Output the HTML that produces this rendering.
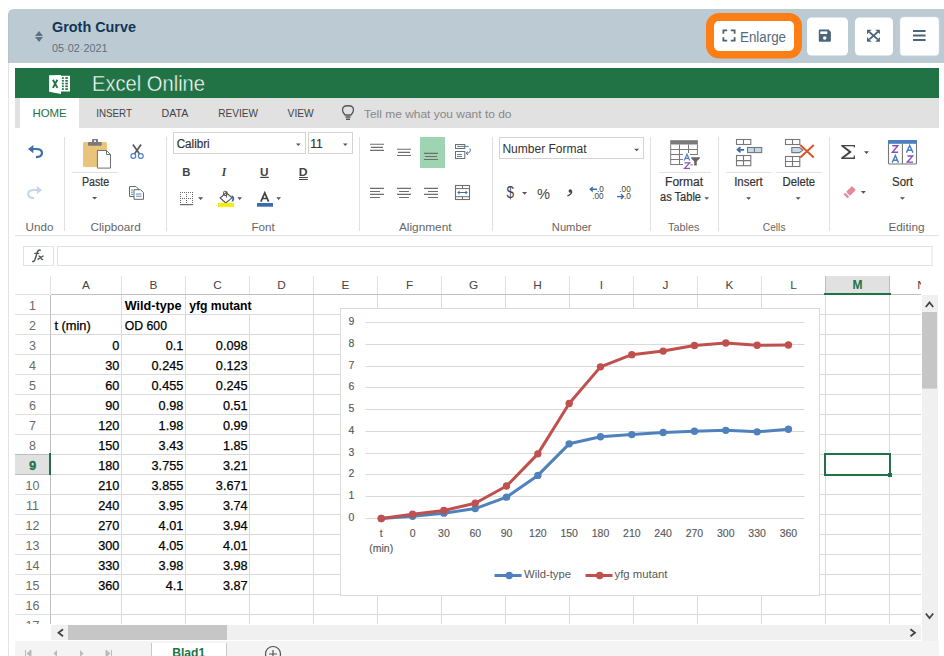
<!DOCTYPE html>
<html><head><meta charset="utf-8"><style>
html,body{margin:0;padding:0;background:#fff;width:944px;height:656px;overflow:hidden}
svg{display:block}
text{font-family:"Liberation Sans", sans-serif}
</style></head><body>
<svg width="944" height="656" viewBox="0 0 944 656">
<path d="M8,15 Q8,9 14,9 L944,9 L944,63 L8,63 Z" fill="#bccbd3"/>
<rect x="8" y="63" width="1" height="593" fill="#dfe4e8" />
<rect x="8" y="14" width="0.6" height="49" fill="#b0bfc8" />
<path d="M35,36 L43,36 L39,31 Z M35,37 L43,37 L39,42 Z" fill="#5f7281"/>
<text x="52" y="32" font-size="14" fill="#123557" font-weight="bold" textLength="84" lengthAdjust="spacingAndGlyphs" >Groth Curve</text>
<text x="52" y="51.5" font-size="11" fill="#5c6f7e" textLength="55.5" lengthAdjust="spacingAndGlyphs" >05<tspan fill="#a3b1ba">-</tspan>02<tspan fill="#a3b1ba">-</tspan>2021</text>
<rect x="706" y="13" width="96" height="45.5" fill="#fd7e14" rx="13"/>
<rect x="714" y="21" width="80" height="30" fill="#ffffff" rx="5"/>
<path d="M723.4,33.8 V30.4 H727.2 M730.8,30.4 H734.6 V33.8 M734.6,37.2 V40.6 H730.8 M727.2,40.6 H723.4 V37.2" fill="none" stroke="#4a6275" stroke-width="1.8"/>
<text x="740" y="41.5" font-size="13.8" fill="#546a7c" textLength="46" lengthAdjust="spacingAndGlyphs" >Enlarge</text>
<rect x="807" y="17.5" width="41" height="38" fill="#ffffff" rx="4.5"/>
<rect x="855" y="17.5" width="38" height="38" fill="#ffffff" rx="4.5"/>
<rect x="900" y="17" width="39" height="38.8" fill="#ffffff" rx="3.8" stroke="#d5dce0" stroke-width="0.5"/>
<path d="M819.5,29.6 H828.6 L830.9,31.9 V40.7 Q830.9,41.7 829.9,41.7 H819.8 Q818.8,41.7 818.8,40.7 V30.6 Q818.8,29.6 819.5,29.6 Z" fill="#4d6578"/>
<rect x="820.3" y="31.4" width="7" height="2.6" fill="#ffffff"/><circle cx="824.7" cy="38.1" r="1.75" fill="#ffffff"/>
<path d="M869.3,32 L877.7,39.4 M877.7,32 L869.3,39.4" stroke="#4d6578" stroke-width="1.8"/>
<path d="M867,29.7 H871.6 L867,34.3 Z M879.9,29.7 H875.3 L879.9,34.3 Z M867,41.7 H871.6 L867,37.1 Z M879.9,41.7 H875.3 L879.9,37.1 Z" fill="#4d6578"/>
<path d="M913,31.1 H925.6 M913,35.6 H925.6 M913,40.1 H925.6" stroke="#4d6578" stroke-width="2"/>
<rect x="15" y="68" width="924" height="30" fill="#217346" />
<rect x="61" y="75.8" width="9" height="15.7" fill="#ffffff"/>
<rect x="61.9" y="77.20" width="1.9" height="1.7" fill="#217346"/><rect x="65.3" y="77.20" width="2.6" height="1.7" fill="#217346"/><rect x="61.9" y="79.95" width="1.9" height="1.7" fill="#217346"/><rect x="65.3" y="79.95" width="2.6" height="1.7" fill="#217346"/><rect x="61.9" y="82.70" width="1.9" height="1.7" fill="#217346"/><rect x="65.3" y="82.70" width="2.6" height="1.7" fill="#217346"/><rect x="61.9" y="85.45" width="1.9" height="1.7" fill="#217346"/><rect x="65.3" y="85.45" width="2.6" height="1.7" fill="#217346"/><rect x="61.9" y="88.20" width="1.9" height="1.7" fill="#217346"/><rect x="65.3" y="88.20" width="2.6" height="1.7" fill="#217346"/>
<path d="M49.1,75.3 L61,74.9 L61,93.9 L49.1,91.8 Z" fill="#ffffff"/>
<path d="M52.9,79.8 L57.4,87.9 M57.4,79.8 L52.9,87.9" stroke="#217346" stroke-width="1.9"/>
<text x="92" y="91.4" font-size="22" fill="#ffffff" textLength="113" lengthAdjust="spacingAndGlyphs" stroke="#217346" stroke-width="0.45">Excel Online</text>
<rect x="15" y="98" width="924" height="30" fill="#e1e1e1" />
<rect x="20" y="98" width="59" height="30" fill="#ffffff" />
<text x="32.4" y="117.3" font-size="11.5" fill="#217346" textLength="34.3" lengthAdjust="spacingAndGlyphs" >HOME</text>
<text x="96.2" y="117.3" font-size="11.5" fill="#444444" textLength="35.8" lengthAdjust="spacingAndGlyphs" >INSERT</text>
<text x="161.5" y="117.3" font-size="11.5" fill="#444444" textLength="27" lengthAdjust="spacingAndGlyphs" >DATA</text>
<text x="218.2" y="117.3" font-size="11.5" fill="#444444" textLength="39.7" lengthAdjust="spacingAndGlyphs" >REVIEW</text>
<text x="287.6" y="117.3" font-size="11.5" fill="#444444" textLength="26.2" lengthAdjust="spacingAndGlyphs" >VIEW</text>
<path d="M345,115 C342,112 342,108.5 343.5,107 C345,105.3 351,105.3 352.5,107 C354,108.5 354,112 351,115 Z" fill="none" stroke="#555" stroke-width="1.3"/>
<path d="M345.5,117 H350.5 M346,119.3 H350" stroke="#555" stroke-width="1.5"/>
<text x="364" y="118.4" font-size="11.5" fill="#888888" textLength="147.5" lengthAdjust="spacingAndGlyphs" >Tell me what you want to do</text>
<rect x="15" y="235" width="924" height="1" fill="#e1e1e1" />
<rect x="64" y="137" width="1" height="94" fill="#e1e1e1" />
<rect x="166" y="137" width="1" height="94" fill="#e1e1e1" />
<rect x="359" y="137" width="1" height="94" fill="#e1e1e1" />
<rect x="492" y="137" width="1" height="94" fill="#e1e1e1" />
<rect x="650" y="137" width="1" height="94" fill="#e1e1e1" />
<rect x="718" y="137" width="1" height="94" fill="#e1e1e1" />
<rect x="829" y="137" width="1" height="94" fill="#e1e1e1" />
<text x="25.6" y="230.7" font-size="11" fill="#666666" textLength="27.8" lengthAdjust="spacingAndGlyphs" >Undo</text>
<text x="90.5" y="230.7" font-size="11" fill="#666666" textLength="50.3" lengthAdjust="spacingAndGlyphs" >Clipboard</text>
<text x="251.4" y="230.7" font-size="11" fill="#666666" textLength="23.3" lengthAdjust="spacingAndGlyphs" >Font</text>
<text x="398.9" y="230.7" font-size="11" fill="#666666" textLength="52.7" lengthAdjust="spacingAndGlyphs" >Alignment</text>
<text x="551.8" y="230.7" font-size="11" fill="#666666" textLength="39.8" lengthAdjust="spacingAndGlyphs" >Number</text>
<text x="668.1" y="230.7" font-size="11" fill="#666666" textLength="31.2" lengthAdjust="spacingAndGlyphs" >Tables</text>
<text x="762.8" y="230.7" font-size="11" fill="#666666" textLength="22.7" lengthAdjust="spacingAndGlyphs" >Cells</text>
<text x="888.4" y="230.7" font-size="11" fill="#666666" textLength="36.2" lengthAdjust="spacingAndGlyphs" >Editing</text>
<rect x="23.5" y="246.5" width="30" height="19" fill="#fff" stroke="#e2e2e2"/>
<rect x="57.5" y="246.5" width="874.5" height="19" fill="#fff" stroke="#e2e2e2"/>
<path d="M32.2,261.2 Q33.8,262.4 35,259.5 L37.4,252 Q38.6,249.2 40.8,250.4" fill="none" stroke="#50555c" stroke-width="1.5"/>
<path d="M34.2,253.4 H39.2" stroke="#50555c" stroke-width="1.2"/>
<path d="M37.6,259.6 Q40.5,257.5 43.6,255.8 M38.6,256 Q40.4,256.2 40.9,258 Q41.4,259.8 43.2,259.6" fill="none" stroke="#50555c" stroke-width="1.3"/>
<rect x="50" y="276" width="1" height="18" fill="#e1e1e1" />
<rect x="121" y="276" width="1" height="18" fill="#e1e1e1" />
<rect x="185" y="276" width="1" height="18" fill="#e1e1e1" />
<rect x="249" y="276" width="1" height="18" fill="#e1e1e1" />
<rect x="313" y="276" width="1" height="18" fill="#e1e1e1" />
<rect x="377" y="276" width="1" height="18" fill="#e1e1e1" />
<rect x="441" y="276" width="1" height="18" fill="#e1e1e1" />
<rect x="505" y="276" width="1" height="18" fill="#e1e1e1" />
<rect x="569" y="276" width="1" height="18" fill="#e1e1e1" />
<rect x="633" y="276" width="1" height="18" fill="#e1e1e1" />
<rect x="697" y="276" width="1" height="18" fill="#e1e1e1" />
<rect x="761" y="276" width="1" height="18" fill="#e1e1e1" />
<rect x="825" y="276" width="1" height="18" fill="#e1e1e1" />
<rect x="889" y="276" width="1" height="18" fill="#e1e1e1" />
<rect x="825" y="276" width="64" height="18" fill="#e1e1e1" />
<rect x="825" y="276" width="1" height="18" fill="#bdbdbd" />
<rect x="889" y="276" width="1" height="18" fill="#bdbdbd" />
<rect x="15" y="294" width="35" height="1" fill="#e1e1e1" />
<rect x="51" y="294" width="870" height="1" fill="#c0c0c0" />
<rect x="824" y="293" width="67" height="2" fill="#217346" />
<text x="86.0" y="289" font-size="11.8" fill="#444444" text-anchor="middle" >A</text>
<text x="153.5" y="289" font-size="11.8" fill="#444444" text-anchor="middle" >B</text>
<text x="217.5" y="289" font-size="11.8" fill="#444444" text-anchor="middle" >C</text>
<text x="281.5" y="289" font-size="11.8" fill="#444444" text-anchor="middle" >D</text>
<text x="345.5" y="289" font-size="11.8" fill="#444444" text-anchor="middle" >E</text>
<text x="409.5" y="289" font-size="11.8" fill="#444444" text-anchor="middle" >F</text>
<text x="473.5" y="289" font-size="11.8" fill="#444444" text-anchor="middle" >G</text>
<text x="537.5" y="289" font-size="11.8" fill="#444444" text-anchor="middle" >H</text>
<text x="601.5" y="289" font-size="11.8" fill="#444444" text-anchor="middle" >I</text>
<text x="665.5" y="289" font-size="11.8" fill="#444444" text-anchor="middle" >J</text>
<text x="729.5" y="289" font-size="11.8" fill="#444444" text-anchor="middle" >K</text>
<text x="793.5" y="289" font-size="11.8" fill="#444444" text-anchor="middle" >L</text>
<text x="857.5" y="289" font-size="12" fill="#217346" font-weight="bold" text-anchor="middle" >M</text>
<text x="921.5" y="289" font-size="11.8" fill="#444444" text-anchor="middle" >N</text>
<rect x="921" y="276" width="23" height="20" fill="#ffffff" />
<rect x="15" y="314" width="35" height="1" fill="#e1e1e1" />
<rect x="51" y="314" width="870" height="1" fill="#dadada" />
<rect x="15" y="334" width="35" height="1" fill="#e1e1e1" />
<rect x="51" y="334" width="870" height="1" fill="#dadada" />
<rect x="15" y="354" width="35" height="1" fill="#e1e1e1" />
<rect x="51" y="354" width="870" height="1" fill="#dadada" />
<rect x="15" y="374" width="35" height="1" fill="#e1e1e1" />
<rect x="51" y="374" width="870" height="1" fill="#dadada" />
<rect x="15" y="394" width="35" height="1" fill="#e1e1e1" />
<rect x="51" y="394" width="870" height="1" fill="#dadada" />
<rect x="15" y="414" width="35" height="1" fill="#e1e1e1" />
<rect x="51" y="414" width="870" height="1" fill="#dadada" />
<rect x="15" y="434" width="35" height="1" fill="#e1e1e1" />
<rect x="51" y="434" width="870" height="1" fill="#dadada" />
<rect x="15" y="454" width="35" height="1" fill="#e1e1e1" />
<rect x="51" y="454" width="870" height="1" fill="#dadada" />
<rect x="15" y="474" width="35" height="1" fill="#e1e1e1" />
<rect x="51" y="474" width="870" height="1" fill="#dadada" />
<rect x="15" y="494" width="35" height="1" fill="#e1e1e1" />
<rect x="51" y="494" width="870" height="1" fill="#dadada" />
<rect x="15" y="514" width="35" height="1" fill="#e1e1e1" />
<rect x="51" y="514" width="870" height="1" fill="#dadada" />
<rect x="15" y="534" width="35" height="1" fill="#e1e1e1" />
<rect x="51" y="534" width="870" height="1" fill="#dadada" />
<rect x="15" y="554" width="35" height="1" fill="#e1e1e1" />
<rect x="51" y="554" width="870" height="1" fill="#dadada" />
<rect x="15" y="574" width="35" height="1" fill="#e1e1e1" />
<rect x="51" y="574" width="870" height="1" fill="#dadada" />
<rect x="15" y="594" width="35" height="1" fill="#e1e1e1" />
<rect x="51" y="594" width="870" height="1" fill="#dadada" />
<rect x="15" y="614" width="35" height="1" fill="#e1e1e1" />
<rect x="51" y="614" width="870" height="1" fill="#dadada" />
<rect x="121" y="295" width="1" height="329" fill="#dadada" />
<rect x="185" y="295" width="1" height="329" fill="#dadada" />
<rect x="249" y="314" width="1" height="310" fill="#dadada" />
<rect x="313" y="295" width="1" height="329" fill="#dadada" />
<rect x="377" y="295" width="1" height="329" fill="#dadada" />
<rect x="441" y="295" width="1" height="329" fill="#dadada" />
<rect x="505" y="295" width="1" height="329" fill="#dadada" />
<rect x="569" y="295" width="1" height="329" fill="#dadada" />
<rect x="633" y="295" width="1" height="329" fill="#dadada" />
<rect x="697" y="295" width="1" height="329" fill="#dadada" />
<rect x="761" y="295" width="1" height="329" fill="#dadada" />
<rect x="825" y="295" width="1" height="329" fill="#dadada" />
<rect x="889" y="295" width="1" height="329" fill="#dadada" />
<rect x="50" y="295" width="1" height="329" fill="#c0c0c0" />
<rect x="15" y="454" width="34" height="20" fill="#e1e1e1" />
<rect x="15" y="454" width="34" height="1" fill="#bdbdbd" />
<rect x="15" y="474" width="34" height="1" fill="#bdbdbd" />
<rect x="49" y="453" width="2" height="22" fill="#217346" />
<clipPath id="gclip"><rect x="0" y="0" width="944" height="624"/></clipPath><g clip-path="url(#gclip)">
<text x="32.5" y="310" font-size="12.5" fill="#6a6a6a" text-anchor="middle" >1</text>
<text x="32.5" y="330" font-size="12.5" fill="#6a6a6a" text-anchor="middle" >2</text>
<text x="32.5" y="350" font-size="12.5" fill="#6a6a6a" text-anchor="middle" >3</text>
<text x="32.5" y="370" font-size="12.5" fill="#6a6a6a" text-anchor="middle" >4</text>
<text x="32.5" y="390" font-size="12.5" fill="#6a6a6a" text-anchor="middle" >5</text>
<text x="32.5" y="410" font-size="12.5" fill="#6a6a6a" text-anchor="middle" >6</text>
<text x="32.5" y="430" font-size="12.5" fill="#6a6a6a" text-anchor="middle" >7</text>
<text x="32.5" y="450" font-size="12.5" fill="#6a6a6a" text-anchor="middle" >8</text>
<text x="32.5" y="469.5" font-size="13" fill="#217346" font-weight="bold" text-anchor="middle" stroke="#217346" stroke-width="0.3">9</text>
<text x="32.5" y="490" font-size="12.5" fill="#6a6a6a" text-anchor="middle" >10</text>
<text x="32.5" y="510" font-size="12.5" fill="#6a6a6a" text-anchor="middle" >11</text>
<text x="32.5" y="530" font-size="12.5" fill="#6a6a6a" text-anchor="middle" >12</text>
<text x="32.5" y="550" font-size="12.5" fill="#6a6a6a" text-anchor="middle" >13</text>
<text x="32.5" y="570" font-size="12.5" fill="#6a6a6a" text-anchor="middle" >14</text>
<text x="32.5" y="590" font-size="12.5" fill="#6a6a6a" text-anchor="middle" >15</text>
<text x="32.5" y="610" font-size="12.5" fill="#6a6a6a" text-anchor="middle" >16</text>
<text x="32.5" y="630" font-size="12.5" fill="#6a6a6a" text-anchor="middle" >17</text>
</g>
<text x="54.4" y="329.6" font-size="12.7" fill="#000" textLength="36.4" lengthAdjust="spacingAndGlyphs" stroke="#000" stroke-width="0.25">t (min)</text>
<text x="124.8" y="309.6" font-size="12.7" fill="#000" font-weight="bold" textLength="56.7" lengthAdjust="spacingAndGlyphs" >Wild-type</text>
<text x="189.2" y="309.6" font-size="12.7" fill="#000" font-weight="bold" textLength="62.3" lengthAdjust="spacingAndGlyphs" >yfg mutant</text>
<text x="124.8" y="329.6" font-size="12.7" fill="#000" textLength="42.2" lengthAdjust="spacingAndGlyphs" stroke="#000" stroke-width="0.25">OD 600</text>
<text x="119.3" y="349.6" font-size="12.7" fill="#000" text-anchor="end" stroke="#000" stroke-width="0.25">0</text>
<text x="183.3" y="349.6" font-size="12.7" fill="#000" text-anchor="end" stroke="#000" stroke-width="0.25">0.1</text>
<text x="247.6" y="349.6" font-size="12.7" fill="#000" text-anchor="end" stroke="#000" stroke-width="0.25">0.098</text>
<text x="119.3" y="369.6" font-size="12.7" fill="#000" text-anchor="end" stroke="#000" stroke-width="0.25">30</text>
<text x="183.3" y="369.6" font-size="12.7" fill="#000" text-anchor="end" stroke="#000" stroke-width="0.25">0.245</text>
<text x="247.6" y="369.6" font-size="12.7" fill="#000" text-anchor="end" stroke="#000" stroke-width="0.25">0.123</text>
<text x="119.3" y="389.6" font-size="12.7" fill="#000" text-anchor="end" stroke="#000" stroke-width="0.25">60</text>
<text x="183.3" y="389.6" font-size="12.7" fill="#000" text-anchor="end" stroke="#000" stroke-width="0.25">0.455</text>
<text x="247.6" y="389.6" font-size="12.7" fill="#000" text-anchor="end" stroke="#000" stroke-width="0.25">0.245</text>
<text x="119.3" y="409.6" font-size="12.7" fill="#000" text-anchor="end" stroke="#000" stroke-width="0.25">90</text>
<text x="183.3" y="409.6" font-size="12.7" fill="#000" text-anchor="end" stroke="#000" stroke-width="0.25">0.98</text>
<text x="247.6" y="409.6" font-size="12.7" fill="#000" text-anchor="end" stroke="#000" stroke-width="0.25">0.51</text>
<text x="119.3" y="429.6" font-size="12.7" fill="#000" text-anchor="end" stroke="#000" stroke-width="0.25">120</text>
<text x="183.3" y="429.6" font-size="12.7" fill="#000" text-anchor="end" stroke="#000" stroke-width="0.25">1.98</text>
<text x="247.6" y="429.6" font-size="12.7" fill="#000" text-anchor="end" stroke="#000" stroke-width="0.25">0.99</text>
<text x="119.3" y="449.6" font-size="12.7" fill="#000" text-anchor="end" stroke="#000" stroke-width="0.25">150</text>
<text x="183.3" y="449.6" font-size="12.7" fill="#000" text-anchor="end" stroke="#000" stroke-width="0.25">3.43</text>
<text x="247.6" y="449.6" font-size="12.7" fill="#000" text-anchor="end" stroke="#000" stroke-width="0.25">1.85</text>
<text x="119.3" y="469.6" font-size="12.7" fill="#000" text-anchor="end" stroke="#000" stroke-width="0.25">180</text>
<text x="183.3" y="469.6" font-size="12.7" fill="#000" text-anchor="end" stroke="#000" stroke-width="0.25">3.755</text>
<text x="247.6" y="469.6" font-size="12.7" fill="#000" text-anchor="end" stroke="#000" stroke-width="0.25">3.21</text>
<text x="119.3" y="489.6" font-size="12.7" fill="#000" text-anchor="end" stroke="#000" stroke-width="0.25">210</text>
<text x="183.3" y="489.6" font-size="12.7" fill="#000" text-anchor="end" stroke="#000" stroke-width="0.25">3.855</text>
<text x="247.6" y="489.6" font-size="12.7" fill="#000" text-anchor="end" stroke="#000" stroke-width="0.25">3.671</text>
<text x="119.3" y="509.6" font-size="12.7" fill="#000" text-anchor="end" stroke="#000" stroke-width="0.25">240</text>
<text x="183.3" y="509.6" font-size="12.7" fill="#000" text-anchor="end" stroke="#000" stroke-width="0.25">3.95</text>
<text x="247.6" y="509.6" font-size="12.7" fill="#000" text-anchor="end" stroke="#000" stroke-width="0.25">3.74</text>
<text x="119.3" y="529.6" font-size="12.7" fill="#000" text-anchor="end" stroke="#000" stroke-width="0.25">270</text>
<text x="183.3" y="529.6" font-size="12.7" fill="#000" text-anchor="end" stroke="#000" stroke-width="0.25">4.01</text>
<text x="247.6" y="529.6" font-size="12.7" fill="#000" text-anchor="end" stroke="#000" stroke-width="0.25">3.94</text>
<text x="119.3" y="549.6" font-size="12.7" fill="#000" text-anchor="end" stroke="#000" stroke-width="0.25">300</text>
<text x="183.3" y="549.6" font-size="12.7" fill="#000" text-anchor="end" stroke="#000" stroke-width="0.25">4.05</text>
<text x="247.6" y="549.6" font-size="12.7" fill="#000" text-anchor="end" stroke="#000" stroke-width="0.25">4.01</text>
<text x="119.3" y="569.6" font-size="12.7" fill="#000" text-anchor="end" stroke="#000" stroke-width="0.25">330</text>
<text x="183.3" y="569.6" font-size="12.7" fill="#000" text-anchor="end" stroke="#000" stroke-width="0.25">3.98</text>
<text x="247.6" y="569.6" font-size="12.7" fill="#000" text-anchor="end" stroke="#000" stroke-width="0.25">3.98</text>
<text x="119.3" y="589.6" font-size="12.7" fill="#000" text-anchor="end" stroke="#000" stroke-width="0.25">360</text>
<text x="183.3" y="589.6" font-size="12.7" fill="#000" text-anchor="end" stroke="#000" stroke-width="0.25">4.1</text>
<text x="247.6" y="589.6" font-size="12.7" fill="#000" text-anchor="end" stroke="#000" stroke-width="0.25">3.87</text>
<rect x="825" y="454" width="65" height="21" fill="none" stroke="#217346" stroke-width="2"/>
<rect x="888" y="473" width="4" height="4" fill="#217346" stroke="#fff" stroke-width="0"/>
<rect x="340.5" y="308.5" width="479" height="287" fill="#fff" stroke="#d9d9d9"/>
<rect x="365.5" y="518" width="439" height="1" fill="#d9d9d9"/>
<text x="354.3" y="520.9" font-size="10.5" fill="#595959" text-anchor="end" stroke="#595959" stroke-width="0.15">0</text>
<rect x="365.5" y="496" width="439" height="1" fill="#d9d9d9"/>
<text x="354.3" y="499.13" font-size="10.5" fill="#595959" text-anchor="end" stroke="#595959" stroke-width="0.15">1</text>
<rect x="365.5" y="474" width="439" height="1" fill="#d9d9d9"/>
<text x="354.3" y="477.36" font-size="10.5" fill="#595959" text-anchor="end" stroke="#595959" stroke-width="0.15">2</text>
<rect x="365.5" y="453" width="439" height="1" fill="#d9d9d9"/>
<text x="354.3" y="455.59" font-size="10.5" fill="#595959" text-anchor="end" stroke="#595959" stroke-width="0.15">3</text>
<rect x="365.5" y="431" width="439" height="1" fill="#d9d9d9"/>
<text x="354.3" y="433.82" font-size="10.5" fill="#595959" text-anchor="end" stroke="#595959" stroke-width="0.15">4</text>
<rect x="365.5" y="409" width="439" height="1" fill="#d9d9d9"/>
<text x="354.3" y="412.05" font-size="10.5" fill="#595959" text-anchor="end" stroke="#595959" stroke-width="0.15">5</text>
<rect x="365.5" y="387" width="439" height="1" fill="#d9d9d9"/>
<text x="354.3" y="390.28" font-size="10.5" fill="#595959" text-anchor="end" stroke="#595959" stroke-width="0.15">6</text>
<rect x="365.5" y="366" width="439" height="1" fill="#d9d9d9"/>
<text x="354.3" y="368.51" font-size="10.5" fill="#595959" text-anchor="end" stroke="#595959" stroke-width="0.15">7</text>
<rect x="365.5" y="344" width="439" height="1" fill="#d9d9d9"/>
<text x="354.3" y="346.74" font-size="10.5" fill="#595959" text-anchor="end" stroke="#595959" stroke-width="0.15">8</text>
<rect x="365.5" y="322" width="439" height="1" fill="#d9d9d9"/>
<text x="354.3" y="324.97" font-size="10.5" fill="#595959" text-anchor="end" stroke="#595959" stroke-width="0.15">9</text>
<text x="381.26" y="537" font-size="10.5" fill="#595959" text-anchor="middle" stroke="#595959" stroke-width="0.15">t</text>
<text x="412.58" y="537" font-size="10.5" fill="#595959" text-anchor="middle" stroke="#595959" stroke-width="0.15">0</text>
<text x="443.9" y="537" font-size="10.5" fill="#595959" text-anchor="middle" stroke="#595959" stroke-width="0.15">30</text>
<text x="475.22" y="537" font-size="10.5" fill="#595959" text-anchor="middle" stroke="#595959" stroke-width="0.15">60</text>
<text x="506.54" y="537" font-size="10.5" fill="#595959" text-anchor="middle" stroke="#595959" stroke-width="0.15">90</text>
<text x="537.86" y="537" font-size="10.5" fill="#595959" text-anchor="middle" stroke="#595959" stroke-width="0.15">120</text>
<text x="569.18" y="537" font-size="10.5" fill="#595959" text-anchor="middle" stroke="#595959" stroke-width="0.15">150</text>
<text x="600.5" y="537" font-size="10.5" fill="#595959" text-anchor="middle" stroke="#595959" stroke-width="0.15">180</text>
<text x="631.82" y="537" font-size="10.5" fill="#595959" text-anchor="middle" stroke="#595959" stroke-width="0.15">210</text>
<text x="663.14" y="537" font-size="10.5" fill="#595959" text-anchor="middle" stroke="#595959" stroke-width="0.15">240</text>
<text x="694.46" y="537" font-size="10.5" fill="#595959" text-anchor="middle" stroke="#595959" stroke-width="0.15">270</text>
<text x="725.78" y="537" font-size="10.5" fill="#595959" text-anchor="middle" stroke="#595959" stroke-width="0.15">300</text>
<text x="757.1" y="537" font-size="10.5" fill="#595959" text-anchor="middle" stroke="#595959" stroke-width="0.15">330</text>
<text x="788.42" y="537" font-size="10.5" fill="#595959" text-anchor="middle" stroke="#595959" stroke-width="0.15">360</text>
<text x="381.26" y="552" font-size="10.5" fill="#595959" text-anchor="middle" stroke="#595959" stroke-width="0.15">(min)</text>
<polyline points="381.26,518.50 412.58,516.32 443.90,513.17 475.22,508.59 506.54,497.17 537.86,475.40 569.18,443.83 600.50,436.75 631.82,434.58 663.14,432.51 694.46,431.20 725.78,430.33 757.10,431.86 788.42,429.24" fill="none" stroke="#4f81bd" stroke-width="3" stroke-linejoin="round"/>
<circle cx="381.26" cy="518.50" r="3.7" fill="#4f81bd"/>
<circle cx="412.58" cy="516.32" r="3.7" fill="#4f81bd"/>
<circle cx="443.90" cy="513.17" r="3.7" fill="#4f81bd"/>
<circle cx="475.22" cy="508.59" r="3.7" fill="#4f81bd"/>
<circle cx="506.54" cy="497.17" r="3.7" fill="#4f81bd"/>
<circle cx="537.86" cy="475.40" r="3.7" fill="#4f81bd"/>
<circle cx="569.18" cy="443.83" r="3.7" fill="#4f81bd"/>
<circle cx="600.50" cy="436.75" r="3.7" fill="#4f81bd"/>
<circle cx="631.82" cy="434.58" r="3.7" fill="#4f81bd"/>
<circle cx="663.14" cy="432.51" r="3.7" fill="#4f81bd"/>
<circle cx="694.46" cy="431.20" r="3.7" fill="#4f81bd"/>
<circle cx="725.78" cy="430.33" r="3.7" fill="#4f81bd"/>
<circle cx="757.10" cy="431.86" r="3.7" fill="#4f81bd"/>
<circle cx="788.42" cy="429.24" r="3.7" fill="#4f81bd"/>
<polyline points="381.26,518.50 412.58,514.19 443.90,510.49 475.22,503.26 506.54,486.06 537.86,453.84 569.18,403.55 600.50,366.87 631.82,354.66 663.14,351.09 694.46,345.43 725.78,343.03 757.10,345.21 788.42,344.99" fill="none" stroke="#c0504d" stroke-width="3" stroke-linejoin="round"/>
<circle cx="381.26" cy="518.50" r="3.7" fill="#c0504d"/>
<circle cx="412.58" cy="514.19" r="3.7" fill="#c0504d"/>
<circle cx="443.90" cy="510.49" r="3.7" fill="#c0504d"/>
<circle cx="475.22" cy="503.26" r="3.7" fill="#c0504d"/>
<circle cx="506.54" cy="486.06" r="3.7" fill="#c0504d"/>
<circle cx="537.86" cy="453.84" r="3.7" fill="#c0504d"/>
<circle cx="569.18" cy="403.55" r="3.7" fill="#c0504d"/>
<circle cx="600.50" cy="366.87" r="3.7" fill="#c0504d"/>
<circle cx="631.82" cy="354.66" r="3.7" fill="#c0504d"/>
<circle cx="663.14" cy="351.09" r="3.7" fill="#c0504d"/>
<circle cx="694.46" cy="345.43" r="3.7" fill="#c0504d"/>
<circle cx="725.78" cy="343.03" r="3.7" fill="#c0504d"/>
<circle cx="757.10" cy="345.21" r="3.7" fill="#c0504d"/>
<circle cx="788.42" cy="344.99" r="3.7" fill="#c0504d"/>
<path d="M494.5,575.5 H521.5" stroke="#4f81bd" stroke-width="3"/><circle cx="509.2" cy="575.5" r="3.7" fill="#4f81bd"/>
<text x="524" y="577.9" font-size="10.5" fill="#595959" textLength="47" lengthAdjust="spacingAndGlyphs" >Wild-type</text>
<path d="M585.5,575.5 H612.5" stroke="#c0504d" stroke-width="3"/><circle cx="599.7" cy="575.5" r="3.7" fill="#c0504d"/>
<text x="614.5" y="577.9" font-size="10.5" fill="#595959" textLength="53" lengthAdjust="spacingAndGlyphs" >yfg mutant</text>
<rect x="922" y="295" width="16" height="346" fill="#f0f0f0" />
<rect x="922" y="312" width="15" height="76.6" fill="#c6c6c6" />
<path d="M925.8,307 L929.5,302.5 L933.2,307" fill="none" stroke="#444" stroke-width="1.8"/>
<path d="M925.8,613.5 L929.5,618 L933.2,613.5" fill="none" stroke="#444" stroke-width="1.8"/>
<rect x="51" y="625" width="870" height="15" fill="#f0f0f0" />
<rect x="68" y="625" width="159" height="15" fill="#c6c6c6" />
<path d="M63,629.3 L58.5,632.8 L63,636.3" fill="none" stroke="#444" stroke-width="1.8"/>
<path d="M910.5,629.3 L915,632.8 L910.5,636.3" fill="none" stroke="#444" stroke-width="1.8"/>
<rect x="15" y="641" width="924" height="15" fill="#f4f4f4" />
<rect x="152" y="643" width="74" height="13" fill="#ffffff" />
<rect x="151" y="643" width="1" height="13" fill="#c8c8c8" />
<rect x="226" y="643" width="1" height="13" fill="#c8c8c8" />
<text x="172.2" y="656.5" font-size="12.5" fill="#217346" font-weight="bold" textLength="33" lengthAdjust="spacingAndGlyphs" >Blad1</text>
<circle cx="273" cy="654" r="7.5" fill="none" stroke="#555" stroke-width="1.2"/>
<path d="M273,650 V658 M269,654 H277" stroke="#555" stroke-width="1.2"/>
<path d="M25.5,650 V657 M31,650 L27,653.5 L31,657 Z" fill="#bbb" stroke="#bbb" stroke-width="1"/>
<path d="M57,650 L53.5,653.5 L57,657 Z" fill="#bbb"/>
<path d="M80,650 L83.5,653.5 L80,657 Z" fill="#bbb"/>
<path d="M111.5,650 V657 M106,650 L110,653.5 L106,657 Z" fill="#bbb" stroke="#bbb" stroke-width="1"/>
<g id="icons">
<!-- undo -->
<path d="M33.3,145.1 L28,149 L33.3,153.3 Z" fill="#3b6ea8"/>
<path d="M31.5,149 H36 C40,149 42,150.5 42,153 C42,155.5 39.5,157 36,157.2" fill="none" stroke="#3b6ea8" stroke-width="2.2"/>
<!-- redo -->
<path d="M36.9,186 L42.2,190 L36.9,194.2 Z" fill="#c6d7ea"/>
<path d="M38.7,190 H34.2 C30.2,190 28.2,191.5 28.2,194 C28.2,196.5 30.7,198 34.2,198.2" fill="none" stroke="#c6d7ea" stroke-width="2.2"/>
<!-- paste -->
<rect x="83" y="142" width="24" height="25" rx="1.5" fill="#ebc47c"/>
<rect x="88" y="142" width="13.7" height="3.7" rx="0.8" fill="#7a7a7a"/>
<rect x="92" y="139" width="6" height="3.5" rx="1" fill="#7a7a7a"/>
<rect x="94" y="140.3" width="2" height="1.6" fill="#fff"/>
<path d="M97.4,150.5 H106.5 L110.5,154.5 V168.1 H97.4 Z" fill="#fff" stroke="#707070" stroke-width="1"/>
<path d="M106.5,150.5 V154.5 H110.5" fill="none" stroke="#707070" stroke-width="1"/>
<rect x="72" y="172" width="46" height="1" fill="#e1e1e1"/>
<path d="M92,197 H97.2 L94.6,199.6 Z" fill="#555"/>
<!-- cut -->
<path d="M132.9,144.6 L139.4,153.8 M141.1,144.6 L134.6,153.8" stroke="#5a5a5a" stroke-width="1.7"/>
<circle cx="133.3" cy="156" r="2.4" fill="none" stroke="#4a80c2" stroke-width="1.2"/>
<circle cx="140.8" cy="156" r="2.4" fill="none" stroke="#4a80c2" stroke-width="1.2"/>
<!-- copy -->
<path d="M129.5,186.5 H136 L138.5,189 V196.5 H129.5 Z" fill="#fff" stroke="#666" stroke-width="1"/>
<path d="M134,189.7 H140.5 L143.5,192.7 V199.3 H134 Z" fill="#fff" stroke="#666" stroke-width="1"/>
<path d="M131,190 H133 M131,192.2 H133 M131,194.4 H133 M136,194 H141.5 M136,196.2 H141.5" stroke="#4a80c2" stroke-width="0.9"/>
<!-- font boxes -->
<rect x="173.5" y="132.5" width="132" height="21" fill="#fff" stroke="#d4d4d4"/>
<rect x="308.5" y="132.5" width="44" height="21" fill="#fff" stroke="#d4d4d4"/>
<path d="M296,143.5 H300.6 L298.3,146 Z M343,143.5 H347.6 L345.3,146 Z" fill="#555"/>
<!-- B I U D -->
<text x="182.3" y="175.6" font-size="11.3" font-weight="bold" fill="#444" style="font-family:'Liberation Sans'">B</text>
<text x="221.8" y="175.6" font-size="11.5" font-style="italic" fill="#444" style="font-family:'Liberation Serif'" font-weight="bold">I</text>
<text x="260.1" y="175.6" font-size="11.5" font-weight="bold" fill="#444" style="font-family:'Liberation Sans'" textLength="8.5" lengthAdjust="spacingAndGlyphs">U</text>
<rect x="260.3" y="176.8" width="8.5" height="1.2" fill="#444"/>
<text x="298.8" y="175.6" font-size="11.5" font-weight="bold" fill="#444" style="font-family:'Liberation Sans'" textLength="8.8" lengthAdjust="spacingAndGlyphs">D</text>
<rect x="299" y="177" width="8.8" height="1" fill="#444"/>
<rect x="299" y="179" width="8.8" height="1" fill="#444"/>
<!-- borders -->
<g fill="#6a6a6a"><rect x="180" y="192" width="1" height="1"/><rect x="180" y="194" width="1" height="1"/><rect x="180" y="196" width="1" height="1"/><rect x="180" y="198" width="1" height="1"/><rect x="180" y="200" width="1" height="1"/><rect x="180" y="202" width="1" height="1"/><rect x="182" y="192" width="1" height="1"/><rect x="182" y="198" width="1" height="1"/><rect x="184" y="192" width="1" height="1"/><rect x="184" y="198" width="1" height="1"/><rect x="186" y="192" width="1" height="1"/><rect x="186" y="194" width="1" height="1"/><rect x="186" y="196" width="1" height="1"/><rect x="186" y="198" width="1" height="1"/><rect x="186" y="200" width="1" height="1"/><rect x="186" y="202" width="1" height="1"/><rect x="188" y="192" width="1" height="1"/><rect x="188" y="198" width="1" height="1"/><rect x="190" y="192" width="1" height="1"/><rect x="190" y="198" width="1" height="1"/><rect x="192" y="192" width="1" height="1"/><rect x="192" y="194" width="1" height="1"/><rect x="192" y="196" width="1" height="1"/><rect x="192" y="198" width="1" height="1"/><rect x="192" y="200" width="1" height="1"/><rect x="192" y="202" width="1" height="1"/></g>
<rect x="180" y="204" width="13.2" height="1.2" fill="#6a6a6a"/>
<path d="M198,197.3 H203.2 L200.6,200 Z M237.3,197.3 H242 L239.65,200 Z M276.3,197.3 H281 L278.65,200 Z" fill="#555"/>
<!-- fill color -->
<path d="M231.5,195 Q234.6,196.2 234.2,199.5 Q233.8,201.6 231.6,202 Q232.9,198.5 231.5,195 Z" fill="#3b6ea8"/>
<path d="M220.2,198 L226.2,192.6 L232,197.8 L225.8,203 Z" fill="#fff" stroke="#555" stroke-width="1.1"/>
<rect x="223.6" y="191.3" width="3.4" height="4.2" rx="1" fill="none" stroke="#555" stroke-width="1"/>
<path d="M226.4,193.5 V197.5" stroke="#555" stroke-width="1"/>
<rect x="218" y="203" width="16" height="3.9" fill="#f4ef00"/>
<!-- font color -->
<path d="M260.9,201.6 L264.75,192.9 L268.6,201.6 M262.2,198.5 H267.3" fill="none" stroke="#444" stroke-width="1.7"/>
<rect x="257" y="203" width="16" height="3.7" fill="#3b6ea8"/>
<!-- alignment -->
<rect x="420" y="137" width="25" height="31" fill="#9fd4b2"/>
<g stroke="#6e6e6e" stroke-width="1.1">
<path d="M370,144.3 H384 M371,147.4 H383 M370,150.4 H384"/>
<path d="M397,149.3 H411 M398,152.4 H410 M397,155.5 H411"/>
<path d="M424,153.4 H438 M425,156.5 H437 M424,159.5 H438"/>
<path d="M370,188.4 H384 M370,191.5 H380 M370,194.4 H384 M370,197.5 H380"/>
<path d="M397,188.4 H411 M399,191.5 H409 M397,194.4 H411 M399,197.5 H409"/>
<path d="M424,188.4 H438 M428,191.5 H438 M424,194.4 H438 M428,197.5 H438"/>
</g>
<!-- wrap text -->
<rect x="455.5" y="144.5" width="9.3" height="4" fill="none" stroke="#6e6e6e" stroke-width="1"/>
<rect x="455.5" y="151.5" width="9.3" height="7" fill="none" stroke="#6e6e6e" stroke-width="1"/>
<path d="M457,146.4 H468.7 M457,154.5 H462 M457,156.5 H462" stroke="#3b6ea8" stroke-width="0.9"/>
<path d="M470,148.5 Q471.5,152.5 466.5,153.3 M468,151.6 L466,153.3 L468,155" fill="none" stroke="#3b6ea8" stroke-width="1"/>
<!-- merge -->
<rect x="455.5" y="185.5" width="14" height="14" fill="none" stroke="#6e6e6e" stroke-width="1.1"/>
<path d="M455.5,188.6 H469.5 M455.5,196.7 H469.5 M462.5,185.5 V188.6 M462.5,196.7 V199.5" stroke="#6e6e6e" stroke-width="1"/>
<path d="M458,192.5 H467" stroke="#3b6ea8" stroke-width="1"/>
<path d="M457.2,192.5 L459.5,190.6 V194.4 Z M467.8,192.5 L465.5,190.6 V194.4 Z" fill="#3b6ea8"/>
<!-- number format -->
<rect x="499.5" y="137.5" width="144" height="21" fill="#fff" stroke="#d4d4d4"/>
<path d="M634.2,148.8 H639.1 L636.65,151.3 Z" fill="#555"/>
<text x="502.4" y="152.8" font-size="12" fill="#333" style="font-family:'Liberation Sans'" textLength="84.2" lengthAdjust="spacingAndGlyphs">Number Format</text>
<text x="506.6" y="197.8" font-size="16.5" fill="#444" style="font-family:'Liberation Sans'" textLength="7.6" lengthAdjust="spacingAndGlyphs">$</text>
<path d="M522,192 H527.1 L524.55,194.8 Z" fill="#555"/>
<text x="537" y="199" font-size="14.8" fill="#444" style="font-family:'Liberation Sans'" textLength="13" lengthAdjust="spacingAndGlyphs">%</text>
<circle cx="570.3" cy="191" r="1.75" fill="#444"/>
<path d="M571.7,191.2 Q571.9,194.3 567.4,195.8" fill="none" stroke="#444" stroke-width="1.3"/>
<g font-size="8.2" fill="#444" style="font-family:'Liberation Sans'">
<text x="597" y="192">.0</text><text x="592.2" y="199">.00</text>
<text x="619.3" y="192">.00</text><text x="624" y="199">.0</text>
</g>
<path d="M590.5,189.3 H597 M592.8,187 L590.3,189.3 L592.8,191.6 M617,196.6 H623.3 M621,194.3 L623.5,196.6 L621,198.9" fill="none" stroke="#3b6ea8" stroke-width="1.4"/>
<!-- format as table -->
<rect x="670.2" y="140.2" width="27.7" height="4.3" fill="#7a7a7a"/>
<path d="M670.7,144.5 V165 M670.7,164.5 H683 M697.4,144.5 V155 M679.5,144.5 V165 M688.5,144.5 V153 M670.7,149.5 H697.4 M670.7,154.5 H683 M690,154.5 H697.4 M670.7,159.5 H683" stroke="#7a7a7a" stroke-width="1"/>
<path d="M684.3,160.6 L687,154.2 L689.7,160.6 M685.3,158.3 H688.7" fill="none" stroke="#4a80c2" stroke-width="1.2"/>
<path d="M684.5,162.8 H689.7 L684.5,168.4 H690" fill="none" stroke="#8a4fbf" stroke-width="1.2"/>
<path d="M690.4,164.8 H692.8" stroke="#7a7a7a" stroke-width="1"/>
<path d="M691.2,157.3 H699.8 V158.6 L696.8,161.2 V165.6 H694.2 V161.2 L691.2,158.6 Z" fill="#666"/>
<rect x="659" y="172" width="52" height="1" fill="#e1e1e1"/>
<g font-size="12" fill="#333" stroke="#333" stroke-width="0.2" style="font-family:'Liberation Sans'">
<text x="665.1" y="186" textLength="37.9" lengthAdjust="spacingAndGlyphs">Format</text>
<text x="660" y="201" textLength="41" lengthAdjust="spacingAndGlyphs">as Table</text>
<text x="81.9" y="185.8" textLength="27.2" lengthAdjust="spacingAndGlyphs">Paste</text>
<text x="734.2" y="186" textLength="28.6" lengthAdjust="spacingAndGlyphs">Insert</text>
<text x="782.5" y="186" textLength="32.6" lengthAdjust="spacingAndGlyphs">Delete</text>
<text x="892" y="186" textLength="21" lengthAdjust="spacingAndGlyphs">Sort</text>
<text x="176.7" y="148" textLength="33" lengthAdjust="spacingAndGlyphs">Calibri</text>
<text x="310.2" y="148">11</text>
</g>
<path d="M704.4,197.3 H709 L706.7,199.8 Z" fill="#555"/>
<!-- insert -->
<g stroke="#777" stroke-width="1.1" fill="none">
<rect x="736.5" y="139.5" width="14.3" height="5"/>
<path d="M743.5,139.5 V144.5"/>
<rect x="736.5" y="155.5" width="14.3" height="10.2"/>
<path d="M743.5,155.5 V165.7 M736.5,160.6 H750.8"/>
<rect x="785.5" y="139.5" width="14.3" height="5"/>
<path d="M792.5,139.5 V144.5"/>
<rect x="785.5" y="156.5" width="14.3" height="10"/>
<path d="M792.5,156.5 V166.5 M785.5,161.5 H799.8"/>
</g>
<rect x="747.5" y="147.5" width="14.2" height="5.1" fill="#c6d8ee" stroke="#777" stroke-width="1.1"/>
<path d="M754.4,147.5 V152.6" stroke="#777" stroke-width="1.1"/>
<path d="M744.1,149.8 H738.5 M740.5,147.2 L737.6,149.8 L740.5,152.4" fill="none" stroke="#3b6ea8" stroke-width="1.8"/>
<path d="M746.1,197.3 H751.1 L748.6,199.8 Z M795.7,197.3 H800.7 L798.2,199.8 Z" fill="#555"/>
<rect x="726.5" y="172" width="45" height="1" fill="#e1e1e1"/><rect x="776.2" y="172" width="45.5" height="1" fill="#e1e1e1"/>
<!-- delete -->
<path d="M791.8,147.5 H799.5 L803,150 L799.5,152.6 H791.8 Z" fill="#c6d8ee" stroke="#777" stroke-width="1.1"/>
<path d="M800.2,145 L813.8,157.5 M813.8,145 L800.2,157.5" stroke="#d9542b" stroke-width="2"/>
<!-- sigma -->
<path d="M841.2,145.6 H854.6 M841.2,158.2 H854.6" stroke="#444" stroke-width="1.4"/><path d="M854.3,144.9 V147.6 M854.3,155.6 V158.9" stroke="#444" stroke-width="1.2"/><path d="M842.2,145.8 L850.2,152 L842.2,158" fill="none" stroke="#444" stroke-width="2"/>
<path d="M864,151.2 H869 L866.5,154 Z M860.8,191 H865.9 L863.35,193.8 Z M899.9,197.3 H905 L902.45,199.8 Z" fill="#555"/>
<!-- eraser -->
<g transform="translate(850.9,191) rotate(-45)" fill="#e5889a">
<rect x="-4.1" y="-2.8" width="8.3" height="5.6" rx="0.9"/>
<rect x="-7.6" y="-2.8" width="2.3" height="5.6" rx="0.5"/>
</g>
<!-- sort -->
<rect x="888.5" y="140.5" width="28" height="23.5" rx="1" fill="#fff" stroke="#777" stroke-width="1.1"/>
<rect x="888.1" y="140.1" width="28.8" height="3.7" fill="#4a80bd"/>
<path d="M902.4,143.8 V164" stroke="#777" stroke-width="1.1"/>
<g stroke-width="1.4" fill="none">
<path d="M892.3,145.8 H897.8 L892.4,152.2 H898.1" stroke="#8a4fbf"/>
<path d="M892.2,162.6 L895.35,155.4 L898.5,162.6 M893.3,160.2 H897.4" stroke="#4a80c2"/>
<path d="M906.4,152.6 L909.7,145.4 L913,152.6 M907.5,150.3 H911.9" stroke="#4a80c2"/>
<path d="M907.4,156 H912.7 L907.3,162.1 H913" stroke="#8a4fbf"/>
</g>
</g>

</svg>
</body></html>
